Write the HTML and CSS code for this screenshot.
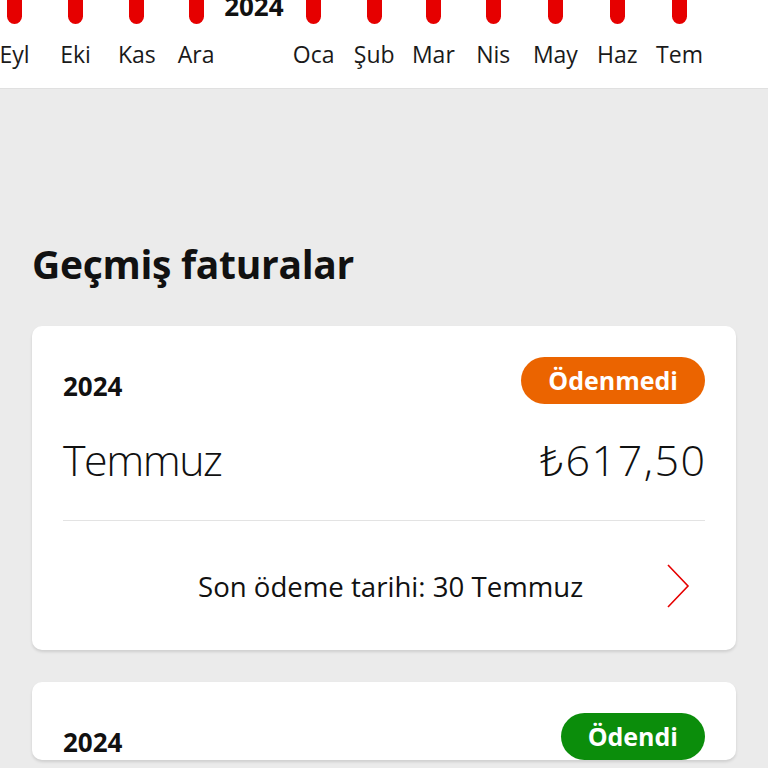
FILE: index.html
```html
<!DOCTYPE html>
<html lang="tr">
<head>
<meta charset="utf-8">
<link rel="stylesheet" href="styles.css">
</head>
<body>
<header class="timeline">
  <div class="months">
    <div class="month"><span class="bar"></span><span class="label">Eyl</span></div>
    <div class="month"><span class="bar"></span><span class="label">Eki</span></div>
    <div class="month"><span class="bar"></span><span class="label">Kas</span></div>
    <div class="month"><span class="bar"></span><span class="label">Ara</span></div>
    <div class="month year"><span class="year-label">2024</span></div>
    <div class="month"><span class="bar"></span><span class="label">Oca</span></div>
    <div class="month"><span class="bar"></span><span class="label">Şub</span></div>
    <div class="month"><span class="bar"></span><span class="label">Mar</span></div>
    <div class="month"><span class="bar"></span><span class="label">Nis</span></div>
    <div class="month"><span class="bar"></span><span class="label">May</span></div>
    <div class="month"><span class="bar"></span><span class="label">Haz</span></div>
    <div class="month"><span class="bar"></span><span class="label">Tem</span></div>
  </div>
</header>
<main class="content">
  <h1 class="title">Geçmiş faturalar</h1>
  <section class="card">
    <div class="card-top">
      <span class="card-year">2024</span>
      <span class="badge badge-unpaid">Ödenmedi</span>
    </div>
    <div class="card-main">
      <span class="card-month">Temmuz</span>
      <span class="card-amount">₺617,50</span>
    </div>
    <div class="card-foot">
      <span class="due">Son ödeme tarihi: 30 Temmuz</span>
      <svg class="chevron" viewBox="0 0 24 44" width="24" height="44" aria-hidden="true"><path d="M2 1 L22 22 L2 43" fill="none" stroke="#e60000" stroke-width="1.6"/></svg>
    </div>
  </section>
  <section class="card">
    <div class="card-top">
      <span class="card-year">2024</span>
      <span class="badge badge-paid">Ödendi</span>
    </div>
  </section>
</main>
</body>
</html>
```
FILE: styles.css
```css
* { box-sizing: border-box; }
html, body { margin: 0; padding: 0; }
body {
  background: #ebebeb;
  font-family: "Open Sans", "Noto Sans", sans-serif;
  color: #111;
  width: 768px;
  height: 768px;
  overflow: hidden;
}
.timeline {
  background: #fff;
  height: 89px;
  border-bottom: 1px solid #e0e0e0;
  overflow: hidden;
}
.months {
  display: grid;
  grid-template-columns: 60.5px 61.5px 61.25px 57.25px 58.25px 61.25px 60px 58.25px 61.5px 62.75px 61.25px 63px;
  margin-left: -15.75px;
}
.month {
  display: flex;
  flex-direction: column;
  align-items: center;
}
.bar {
  width: 15px;
  height: 24px;
  background: #e60000;
  border-radius: 0 0 7.5px 7.5px;
}
.label {
  margin-top: 14px;
  font-size: 23px;
  line-height: 32px;
  color: #1a1a1a;
  white-space: nowrap;
}
.year-label {
  margin-top: -10px;
  font-size: 26px;
  font-weight: 700;
  line-height: 32px;
  color: #111;
}
.content {
  padding: 0 32px;
}
.title {
  margin: 0;
  padding-top: 147px;
  font-size: 39px;
  font-weight: 700;
  line-height: 56px;
  letter-spacing: -0.3px;
  color: #111;
}
.card {
  background: #fff;
  border-radius: 10px;
  box-shadow: 0 2px 3px rgba(0,0,0,0.12);
  padding: 31px 31px 0;
  margin-top: 34px;
}
.card + .card { margin-top: 32px; }
.card-top {
  display: flex;
  justify-content: space-between;
  align-items: center;
  height: 47px;
}
.card-year {
  font-size: 26px;
  font-weight: 700;
  padding-top: 10px;
}
.badge {
  height: 47px;
  border-radius: 24px;
  padding: 0 27px;
  color: #fff;
  font-size: 25px;
  font-weight: 700;
  line-height: 47px;
}
.badge-unpaid { background: #eb6400; }
.badge-paid { background: #0b8d0b; }
.card-main {
  display: flex;
  justify-content: space-between;
  align-items: center;
  border-bottom: 1px solid #e3e3e3;
  height: 117px;
  padding-top: 2px;
  padding-bottom: 8px;
}
.card-month, .card-amount {
  font-size: 43px;
  font-weight: 300;
  color: #111;
}
.card-month { letter-spacing: -1.5px; }
.card-amount { letter-spacing: 1.5px; margin-right: -1.5px; }
.card-foot {
  display: flex;
  align-items: center;
  justify-content: space-between;
  height: 129px;
  padding-left: 135px;
  padding-right: 15px;
}
.due {
  font-size: 27.6px;
  color: #111;
}
.chevron { display: block; }
```
